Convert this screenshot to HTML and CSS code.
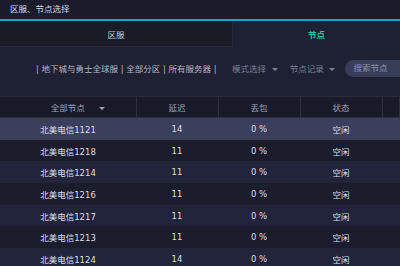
FILE: index.html
```html
<!DOCTYPE html>
<html lang="zh-CN">
<head>
  <meta charset="UTF-8">
  <title>区服、节点选择</title>
  <link rel="stylesheet" href="styles.css">
</head>
<body>
  <div class="titlebar">区服、节点选择</div>

  <div class="tabs">
    <div class="tab">区服</div>
    <div class="tab active">节点</div>
  </div>

  <div class="filter">
    <div class="path">| 地下城与勇士全球服 | 全部分区 | 所有服务器 |</div>
    <div class="drop">模式选择 <span class="caret"></span></div>
    <div class="drop">节点记录 <span class="caret"></span></div>
    <div class="search">搜索节点</div>
  </div>

  <table class="nodes">
    <colgroup>
      <col class="c-name">
      <col class="c-num">
      <col class="c-num">
      <col class="c-num">
      <col>
    </colgroup>
    <thead>
      <tr>
        <th>全部节点<span class="caret sort"></span></th>
        <th>延迟</th>
        <th>丢包</th>
        <th>状态</th>
        <th></th>
      </tr>
    </thead>
    <tbody id="rows"></tbody>
  </table>

  <script>
    const nodes = [
      ["北美电信1121", 14], ["北美电信1218", 11], ["北美电信1214", 11],
      ["北美电信1216", 11], ["北美电信1217", 11], ["北美电信1213", 11],
      ["北美电信1124", 14]
    ];

    const tbody = document.getElementById("rows");
    nodes.forEach((n, i) => {
      const cls = i === 0 ? "selected" : (i % 2 ? "odd" : "even");
      tbody.innerHTML += `<tr class="${cls}">
        <td>${n[0]}</td>
        <td>${n[1]}</td>
        <td>0 %</td>
        <td>空闲</td>
        <td></td>
      </tr>`;
    });
  </script>
</body>
</html>
```

FILE: styles.css
```css
body {
  margin: 0;
  background: #1e2034;
  font-family: 'DejaVu Sans', 'Noto Sans CJK SC', sans-serif;
  font-size: 8.5px;
  color: #d4d6e0;
  overflow: hidden;
}

.titlebar {
  height: 17px;
  padding: 2px 0 0 10px;
  background: #1b1c2b;
  color: #d8dae2;
  border-bottom: 2px solid #18a6c6;
}

.tabs {
  display: flex;
  height: 26px;
}

.tab {
  display: flex;
  align-items: center;
  justify-content: center;
  flex: 1;
  color: #c8cad4;
}

.tab:first-child {
  flex: 0 0 232px;
  background: #1a1b26;
  border-right: 1px solid #262835;
  border-bottom: 1px solid #262835;
}

.tab.active {
  color: #22c3a8;
  font-weight: bold;
}

.filter {
  display: flex;
  align-items: center;
  height: 42px;
  padding: 0 0 7px 36px;
  border-bottom: 1px solid #2a2c3e;
}

.path {
  color: #b4b7c6;
  width: 196px;
  white-space: nowrap;
}

.drop {
  color: #7d8296;
  margin-right: 12px;
  white-space: nowrap;
}

.caret {
  display: inline-block;
  width: 0;
  height: 0;
  margin-left: 3px;
  vertical-align: middle;
  border-left: 3px solid transparent;
  border-right: 3px solid transparent;
  border-top: 3px solid #7d8296;
}

.search {
  flex: 1;
  height: 17px;
  line-height: 17px;
  margin-left: -2px;
  padding-left: 8px;
  border-radius: 9px 0 0 9px;
  background: #393e58;
  color: #8d92aa;
}

.nodes {
  width: 100%;
  border-collapse: collapse;
  table-layout: fixed;
}

.c-name { width: 136px; }
.c-num { width: 82px; }

th {
  height: 20px;
  padding: 0;
  background: #181a2a;
  color: #9fa3b4;
  font-weight: normal;
  border-right: 1px solid #2c2f42;
  border-bottom: 1px solid #2c2f42;
}

th .sort {
  margin-left: 14px;
  margin-right: -20px;
  border-top-color: #9fa3b4;
}

td {
  height: 21.7px;
  padding: 0;
  text-align: center;
  color: #dcdee6;
}

tr.selected td { background: #3a3f5c; }
tr.odd td { background: #1b1c2c; }
tr.even td { background: #22243c; }
```
